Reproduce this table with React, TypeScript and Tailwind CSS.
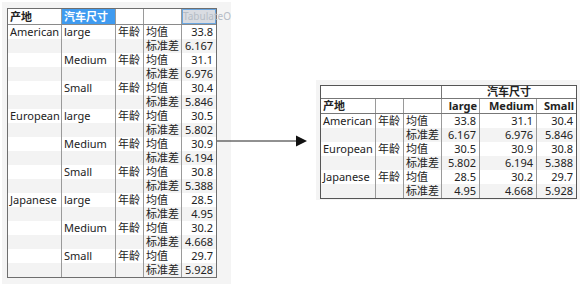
const font = { fontFamily: '"Noto Sans", "Noto Sans CJK SC", sans-serif' };

type Pair = { region: string; size: string; mean: string; sd: string };

const leftRows: Pair[] = [
  { region: 'American', size: 'large', mean: '33.8', sd: '6.167' },
  { region: '', size: 'Medium', mean: '31.1', sd: '6.976' },
  { region: '', size: 'Small', mean: '30.4', sd: '5.846' },
  { region: 'European', size: 'large', mean: '30.5', sd: '5.802' },
  { region: '', size: 'Medium', mean: '30.9', sd: '6.194' },
  { region: '', size: 'Small', mean: '30.8', sd: '5.388' },
  { region: 'Japanese', size: 'large', mean: '28.5', sd: '4.95' },
  { region: '', size: 'Medium', mean: '30.2', sd: '4.668' },
  { region: '', size: 'Small', mean: '29.7', sd: '5.928' },
];

const rightRows = [
  { region: 'American', mean: ['33.8', '31.1', '30.4'], sd: ['6.167', '6.976', '5.846'] },
  { region: 'European', mean: ['30.5', '30.9', '30.8'], sd: ['5.802', '6.194', '5.388'] },
  { region: 'Japanese', mean: ['28.5', '30.2', '29.7'], sd: ['4.95', '4.668', '5.928'] },
];

const LeftTable = () => (
  <div className="w-[210px] border border-[#6e6e6e] bg-white text-[11px] leading-[14px] text-[#222]">
    {/* header */}
    <div className="flex h-[16px] border-b border-[#8a8a8a]">
      <div className="w-[54px] border-r border-[#9a9a9a] px-[2px] font-bold leading-[15px]">产地</div>
      <div className="w-[54px] border-r border-[#9a9a9a] bg-[#3f9bf0] px-[2px] font-bold leading-[15px] text-white">汽车尺寸</div>
      <div className="w-[28px] border-r border-[#9a9a9a]" />
      <div className="w-[38px] border-r border-[#9a9a9a]" />
      <div className="relative w-[34px]">
        <div className="absolute inset-0 border border-[#6aa6e0] bg-[#d9dce2]" />
        <span className="absolute left-[1px] top-0 whitespace-nowrap text-[10px] leading-[15px] text-[#b5bcc6]">TabulateO</span>
      </div>
    </div>
    {leftRows.map((r, i) => (
      <div key={i}>
        <div className="flex h-[14px] bg-white">
          <div className="w-[54px] border-r border-[#9a9a9a] px-[2px]">{r.region}</div>
          <div className="w-[54px] border-r border-[#9a9a9a] px-[2px]">{r.size}</div>
          <div className="w-[28px] border-r border-[#9a9a9a] px-[2px]">年龄</div>
          <div className="w-[38px] border-r border-[#9a9a9a] px-[2px]">均值</div>
          <div className="w-[34px] px-[3px] text-right">{r.mean}</div>
        </div>
        <div className="flex h-[14px] bg-[#f3f3f3]">
          <div className="w-[54px] border-r border-[#9a9a9a]" />
          <div className="w-[54px] border-r border-[#9a9a9a]" />
          <div className="w-[28px] border-r border-[#9a9a9a]" />
          <div className="w-[38px] border-r border-[#9a9a9a] px-[2px]">标准差</div>
          <div className="w-[34px] px-[3px] text-right">{r.sd}</div>
        </div>
      </div>
    ))}
  </div>
);

const RightTable = () => (
  <div className="w-[257px] border border-[#555] bg-white text-[11px] leading-[14px] text-[#222]">
    <div className="flex h-[13px] border-b border-[#777]">
      <div className="w-[121px] border-r border-[#777]" />
      <div className="flex-1 text-center font-bold leading-[12px]">汽车尺寸</div>
    </div>
    <div className="flex h-[15px] border-b border-[#777] font-bold">
      <div className="w-[55px] border-r border-[#9a9a9a] px-[2px]">产地</div>
      <div className="w-[28px] border-r border-[#9a9a9a]" />
      <div className="w-[38px] border-r border-[#9a9a9a]" />
      <div className="w-[38px] border-r border-[#9a9a9a] px-[2px] text-right">large</div>
      <div className="w-[57px] border-r border-[#9a9a9a] px-[2px] text-right">Medium</div>
      <div className="flex-1 px-[2px] text-right">Small</div>
    </div>
    {rightRows.map((r, i) => (
      <div key={i}>
        <div className="flex h-[14px] bg-white">
          <div className="w-[55px] border-r border-[#9a9a9a] px-[2px]">{r.region}</div>
          <div className="w-[28px] border-r border-[#9a9a9a] px-[2px]">年龄</div>
          <div className="w-[38px] border-r border-[#9a9a9a] px-[2px]">均值</div>
          <div className="w-[38px] border-r border-[#9a9a9a] px-[3px] text-right">{r.mean[0]}</div>
          <div className="w-[57px] border-r border-[#9a9a9a] px-[3px] text-right">{r.mean[1]}</div>
          <div className="flex-1 px-[3px] text-right">{r.mean[2]}</div>
        </div>
        <div className="flex h-[14px] bg-[#f3f3f3]">
          <div className="w-[55px] border-r border-[#9a9a9a]" />
          <div className="w-[28px] border-r border-[#9a9a9a]" />
          <div className="w-[38px] border-r border-[#9a9a9a] px-[2px]">标准差</div>
          <div className="w-[38px] border-r border-[#9a9a9a] px-[3px] text-right">{r.sd[0]}</div>
          <div className="w-[57px] border-r border-[#9a9a9a] px-[3px] text-right">{r.sd[1]}</div>
          <div className="flex-1 px-[3px] text-right">{r.sd[2]}</div>
        </div>
      </div>
    ))}
  </div>
);

export default function App() {
  return (
    <div className="relative flex h-[287px] w-[584px] items-start bg-white" style={font}>
      {/* left report */}
      <div className="ml-[2px] mt-[2px] h-[282px] w-[229px] bg-[#f4f4f4] pl-[5px] pt-[6px]">
        <LeftTable />
      </div>

      {/* arrow between the two reports */}
      <svg className="absolute left-[217px] top-[135px]" width="92" height="12" viewBox="0 0 92 12">
        <line x1="0" y1="6" x2="80" y2="6" stroke="#222" strokeWidth="1" />
        <polygon points="79,0.5 90,6 79,11.5" fill="#111" />
      </svg>

      {/* right report */}
      <div className="ml-[85px] mt-[80px] h-[120px] w-[264px] bg-[#f4f4f4] pl-[4px] pt-[5px]">
        <RightTable />
      </div>
    </div>
  );
}
